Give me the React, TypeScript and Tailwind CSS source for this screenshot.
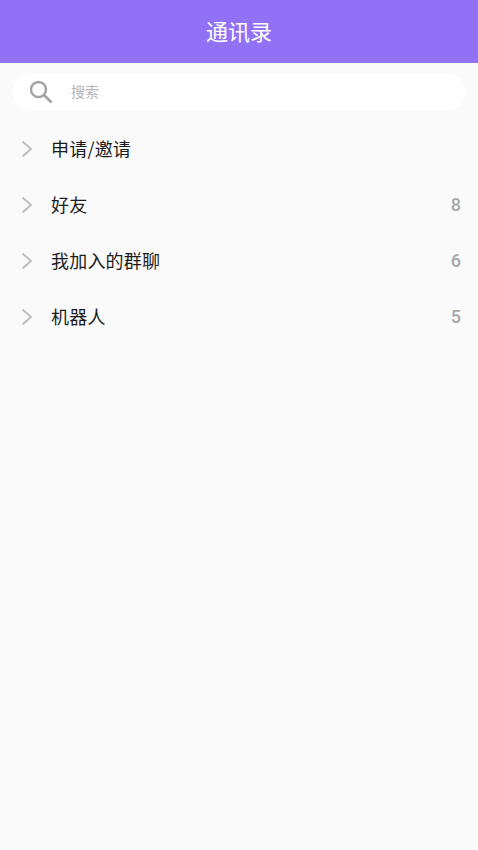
const rows = [
  { name: '申请/邀请' },
  { name: '好友', count: 8 },
  { name: '我加入的群聊', count: 6 },
  { name: '机器人', count: 5 },
]

function Chevron() {
  return (
    <svg width="12" height="18" viewBox="0 0 12 18" fill="none" className="shrink-0">
      <path d="M1.5 1.5L10 9L1.5 16.5" stroke="#bcbcbc" strokeWidth="1.8" />
    </svg>
  )
}

export default function App() {
  return (
    <div
      className="flex h-[850px] w-[478px] flex-col overflow-hidden bg-[#fafafa]"
      style={{ fontFamily: '"Noto Sans CJK SC", "Liberation Sans", sans-serif' }}
    >
      <div className="flex h-[63px] shrink-0 items-center justify-center bg-[#9172f6] pb-[2px] text-[22px] text-white">通讯录</div>
      <div className="px-[13px] pt-[11px] pb-[11px]">
        <div className="flex h-[36px] items-center rounded-[18px] bg-white pl-[16px]">
          <svg width="24" height="24" viewBox="0 0 24 24" fill="none" className="shrink-0">
            <circle cx="9.5" cy="9.5" r="7.5" stroke="#a3a3a3" strokeWidth="2.4" />
            <path d="M15 15L22.5 22.5" stroke="#a3a3a3" strokeWidth="2.6" />
          </svg>
          <span className="ml-[18px] pb-[2px] text-[14px] text-[#b4b4b4]">搜索</span>
        </div>
      </div>
      <div className="flex flex-col">
        {rows.map((row) => (
          <div key={row.name} className="flex h-[56px] items-center border-b border-[#f8f8f8] pr-[17px] pl-[21px]">
            <Chevron />
            <span className="ml-[18px] text-[18px] tracking-[0.2px] text-[#1c1c1c]">{row.name}</span>
            {row.count !== undefined && (
              <span className="ml-auto font-['Roboto',sans-serif] text-[18px] font-medium text-[#a8a8a8]">{row.count}</span>
            )}
          </div>
        ))}
      </div>
    </div>
  )
}
